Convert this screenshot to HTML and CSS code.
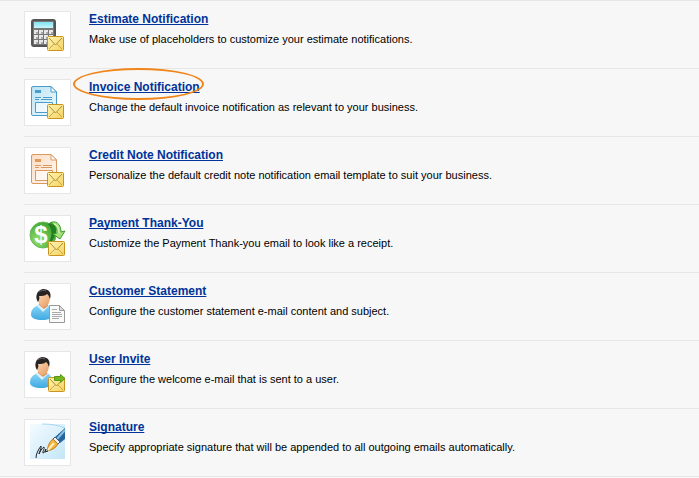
FILE: index.html
```html
<!DOCTYPE html>
<html lang="en">
<head>
  <meta charset="UTF-8" />
  <meta name="viewport" content="width=device-width, initial-scale=1.0" />
  <title>Email Templates</title>
  <link rel="stylesheet" href="styles.css">
</head>
<body>
  <!-- shared shapes -->
  <svg class="defs" aria-hidden="true">
    <defs>
      <linearGradient id="paper" x1="0" y1="0" x2="1" y2="1">
        <stop offset="0" stop-color="#fff4b0" /><stop offset="1" stop-color="#f5d262" />
      </linearGradient>
      <linearGradient id="screen" x1="0" y1="0" x2="0" y2="1">
        <stop offset="0" stop-color="#7fe2f3" /><stop offset="1" stop-color="#c9f6fc" />
      </linearGradient>
      <linearGradient id="blueDoc" x1="0" y1="0" x2="1" y2="1">
        <stop offset="0" stop-color="#b9e2f4" /><stop offset="1" stop-color="#f4fbfe" />
      </linearGradient>
      <linearGradient id="orangeDoc" x1="0" y1="0" x2="1" y2="1">
        <stop offset="0" stop-color="#fbdcc4" /><stop offset="1" stop-color="#fffaf5" />
      </linearGradient>
      <radialGradient id="coin" cx="0.3" cy="0.7" r="0.8">
        <stop offset="0" stop-color="#94dd68" /><stop offset="1" stop-color="#37a02f" />
      </radialGradient>
      <linearGradient id="shirt" x1="0" y1="0" x2="0" y2="1">
        <stop offset="0" stop-color="#8ad6f8" /><stop offset="1" stop-color="#3fa9e0" />
      </linearGradient>
      <linearGradient id="face" x1="0" y1="0" x2="1" y2="1">
        <stop offset="0" stop-color="#ffdcb8" /><stop offset="1" stop-color="#e59a62" />
      </linearGradient>
      <linearGradient id="sky" x1="0" y1="0" x2="1" y2="1">
        <stop offset="0" stop-color="#f4fbff" /><stop offset="1" stop-color="#c3e6f8" />
      </linearGradient>
      <g id="envelope">
        <rect x="0.5" y="0.5" width="16" height="14" rx="1" fill="url(#paper)" stroke="#c99320" />
        <path d="M2 13l5-5M15 13l-5-5" fill="none" stroke="#cda548" />
        <path d="M2 2l6.500 7L15 2" fill="none" stroke="#a99038" />
      </g>
      <g id="sheet">
        <path d="M8 6.500h18l5.500 5.500v23.500H8a1.500 1.500 0 0 1-1.500-1.500V8A1.500 1.500 0 0 1 8 6.500z" />
        <path d="M26 6.500V12h5.500z" fill="#fff" />
        <path d="M10 17.500h6M18 17.500h9M10 19.500h4M16 19.500h11" />
        <path d="M10.500 22.500h17v10h-17z" fill="#fff" fill-opacity="0.5" />
      </g>
      <g id="person">
        <path d="M6 31c0-5 2-8 8-10h9c4 2 5 5 5 11 0 2-5 4-11 4S6 34 6 31z" fill="url(#shirt)" />
        <path d="M12 22l6 6 6-6-1-2H13z" fill="#d8f2ff" />
        <path d="M14 18h9v4l-4 3-5-4z" fill="#e0935a" />
        <path d="M12 12c1-4 13-5 13 1 0 6-3 10-6 10-4 0-7-6-7-11z" fill="url(#face)" />
        <path d="M13 18C10 14 11 6 18 5c6 0 9 4 7 10-1-2-1-4-3-5-2 2-5 2-8 2 1 2 0 4-1 6z" fill="#272322" />
        <path d="M14 8c2-2 5-2 7-1" fill="none" stroke="#686260" />
      </g>
    </defs>
  </svg>

  <ul class="templates">
    <li class="template">
      <span class="icon">
        <svg viewBox="0 0 45 45" aria-hidden="true">
          <rect x="7" y="8" width="23" height="26" rx="2" fill="#777" stroke="#555" stroke-width="2" />
          <rect x="9" y="10" width="19" height="6" fill="url(#screen)" />
          <path d="M10 13.500h17" stroke="#a5edf7" stroke-dasharray="3 1" />
          <path d="M9 20h19M9 25h19M9 30h19" stroke="#e8e8e8" stroke-width="4" stroke-dasharray="4 1" />
          <path d="M11 21h17M11 26h17M11 31h17" stroke="#aaa" stroke-width="2" stroke-dasharray="2 3" />
          <use href="#envelope" x="22" y="24" />
        </svg>
      </span>
      <div class="text">
        <a href="#">Estimate Notification</a>
        <p>Make use of placeholders to customize your estimate notifications.</p>
      </div>
    </li>
    <li class="template">
      <span class="icon">
        <svg viewBox="0 0 45 45" aria-hidden="true">
          <use href="#sheet" fill="url(#blueDoc)" stroke="#4a9dca" />
          <path d="M10 10h6v3h-6z" fill="#4a9dca" />
          <use href="#envelope" x="22" y="24" />
        </svg>
      </span>
      <div class="text">
        <a href="#" class="circled">Invoice Notification</a>
        <p>Change the default invoice notification as relevant to your business.</p>
      </div>
    </li>
    <li class="template">
      <span class="icon">
        <svg viewBox="0 0 45 45" aria-hidden="true">
          <use href="#sheet" fill="url(#orangeDoc)" stroke="#dc985c" />
          <path d="M10 11h6v3h-6z" fill="#e09a5c" />
          <use href="#envelope" x="22" y="24" />
        </svg>
      </span>
      <div class="text">
        <a href="#">Credit Note Notification</a>
        <p>Personalize the default credit note notification email template to suit your business.</p>
      </div>
    </li>
    <li class="template">
      <span class="icon">
        <svg viewBox="0 0 45 45" aria-hidden="true">
          <circle cx="18" cy="19" r="13" fill="url(#coin)" stroke="#68b955" />
          <path d="M23 8c4-3 7-2 8 2 1 5 0 9-4 15l-3 1c3-6 4-12-1-18z" fill="#23801f" />
          <path d="M25 7c5-3 11 0 11 9l4-1-5 8-7-5 4-1c0-5-2-9-7-10z" fill="#a2e078" stroke="#3b9a2b" />
          <path d="M29 8c3 1 5 4 5 9" fill="none" stroke="#e4fad0" />
          <text x="16" y="27" class="dollar">$</text>
          <use href="#envelope" x="23" y="25" />
        </svg>
      </span>
      <div class="text">
        <a href="#">Payment Thank-You</a>
        <p>Customize the Payment Thank-you email to look like a receipt.</p>
      </div>
    </li>
    <li class="template">
      <span class="icon">
        <svg viewBox="0 0 45 45" aria-hidden="true">
          <use href="#person" />
          <path d="M24.500 21.500h10l5 5v12h-15z" fill="#fafafa" stroke="#999" />
          <path d="M34.500 21.500v5h5z" fill="#ddd" stroke="#999" />
          <path d="M27 25.500h5M27 28.500h9M27 30.500h10M27 32.500h10M27 34.500h7" stroke="#aaa" />
        </svg>
      </span>
      <div class="text">
        <a href="#">Customer Statement</a>
        <p>Configure the customer statement e-mail content and subject.</p>
      </div>
    </li>
    <li class="template">
      <span class="icon">
        <svg viewBox="0 0 45 45" aria-hidden="true">
          <use href="#person" x="-1" />
          <use href="#envelope" x="23" y="25" />
          <path d="M29.500 24.500h6v-2l4.500 4-4.500 4v-2h-6z" fill="#72b51d" stroke="#5a9615" />
        </svg>
      </span>
      <div class="text">
        <a href="#">User Invite</a>
        <p>Configure the welcome e-mail that is sent to a user.</p>
      </div>
    </li>
    <li class="template">
      <span class="icon">
        <svg viewBox="0 0 45 45" aria-hidden="true">
          <rect x="5" y="4" width="35" height="35" fill="url(#sky)" />
          <path d="M17 4c9 0 16 1 23 4" fill="none" stroke="#a5d8ef" />
          <path d="M40 8v11l-5 4-6-5z" fill="#28669c" />
          <path d="M40 10l-8 9" stroke="#86c2e4" stroke-width="2" />
          <path d="M30 17l5 5-2 2-5-5z" fill="#eef3f6" stroke="#4a5c70" />
          <path d="M28 19l5 5c-2 4-6 6-11 7 1-5 2-9 6-12z" fill="#f2b23e" stroke="#c07c20" />
          <path d="M23 30l6-7" stroke="#fff0ba" stroke-width="2" />
          <path d="M11 38c0-4 2-8 5-12 1 2-2 6-2 8 1-2 3-6 5-7 1 2-2 5-1 6 2 0 2-3 3-4l-1 3 3-1" fill="none" stroke="#25272c" stroke-linejoin="round" />
        </svg>
      </span>
      <div class="text">
        <a href="#">Signature</a>
        <p>Specify appropriate signature that will be appended to all outgoing emails automatically.</p>
      </div>
    </li>
  </ul>
</body>
</html>
```
FILE: styles.css
```css
:root {
  --background: #f7f7f7;
  --line: #e6e6e6;
  --link: #003399;
  --text: #000000;
  --mark: #f08519;
}

body {
  margin: 0;
  background-color: var(--background);
  color: var(--text);
  font-family: "Liberation Sans", Arial, Helvetica, sans-serif;
  font-size: 11px;
}

.defs {
  position: absolute;
  width: 0;
  height: 0;
}

.templates {
  list-style: none;
  margin: 0;
  padding: 0 0 0 24px;
  border-top: 1px solid var(--line);
  border-bottom: 1px solid var(--line);
}

.template {
  display: flex;
  gap: 18px;
  padding: 10px 0;
}

.template + .template {
  border-top: 1px solid var(--line);
}

.icon {
  flex: none;
  border: 1px solid var(--line);
  background-color: #ffffff;
}

.icon svg {
  display: block;
  width: 45px;
  height: 45px;
}

.dollar {
  font-size: 24px;
  font-weight: bold;
  text-anchor: middle;
  fill: #ffffff;
}

.text a {
  position: relative;
  display: inline-block;
  color: var(--link);
  font-size: 12px;
  font-weight: bold;
  line-height: 16px;
  text-decoration-skip-ink: none;
}

.text p {
  margin: 4px 0 0;
  line-height: 16px;
}

/* hand-drawn style ring round the link */
.circled::after {
  content: "";
  position: absolute;
  inset: -11px -4px -5px -16px;
  border: 2px solid var(--mark);
  border-radius: 50%;
  pointer-events: none;
}
```
